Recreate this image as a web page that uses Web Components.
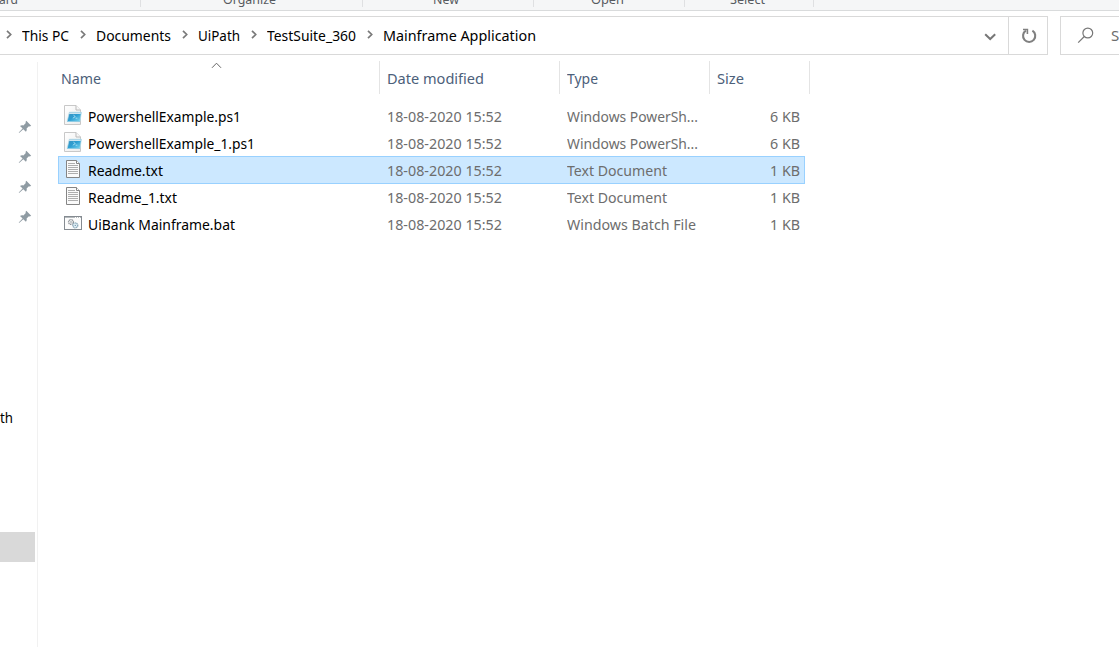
<!DOCTYPE html>
<html lang="en">
<head>
<meta charset="utf-8">
<title>Mainframe Application</title>
<style>
html, body { margin: 0; height: 100%; overflow: hidden; background: #fff; }
body { font: 15px/20px "Noto Sans", "Open Sans", sans-serif; color: #000; }
</style>
</head>
<body>
<file-explorer></file-explorer>
<script>
// Text condensed horizontally to a given width.
class FitText extends HTMLElement {
  connectedCallback() {
    const root = this.attachShadow({ mode: 'open' });
    root.innerHTML = `<style>:host{display:inline-block;white-space:pre;flex:none}span{display:inline-block;transform-origin:0 50%}</style><span><slot></slot></span>`;
    const w = Number(this.getAttribute('w'));
    if (!w) return;
    const span = root.querySelector('span');
    const natural = span.getBoundingClientRect().width;
    span.style.transform = `scaleX(${w / natural})`;
    this.style.width = w + 'px';
  }
}
customElements.define('fit-text', FitText);

const sheet = (id) => `<svg width="18" height="20" viewBox="0 0 18 20">
  <defs><linearGradient id="${id}" x1="0" y1="0" x2="1" y2="1"><stop offset="0" stop-color="#fff"/><stop offset="1" stop-color="#ececec"/></linearGradient>
  <linearGradient id="${id}b" x1="0" y1="0" x2="1" y2="1"><stop offset="0" stop-color="#3d91bd"/><stop offset=".5" stop-color="#2d9ed2"/><stop offset="1" stop-color="#80daf2"/></linearGradient></defs>
  <path d="M.5.5H12L16.5 5V19.5H.5Z" fill="url(#${id})" stroke="#c8c8c8"/>
  <path d="M12 .5V5H16.5" fill="#f7f7f7" stroke="#bbb"/>
  <path d="M5.3 7.2H17.4L16 16.5H3.2Z" fill="url(#${id}b)" stroke="#b8dcea" stroke-width=".7"/>
  <path d="M5.4 7.5H17L16.7 9H5Z" fill="#cfe6f0"/>
  <path d="M9.5 10.2L11.3 11.6L8.8 13.2M11.6 13.2H13.4" fill="none" stroke="#bfeaf8" stroke-width=".8"/>
  <path d="M3.2 16.5H16" stroke="#8ecbe3" stroke-width="1"/></svg>`;
const ICONS = {
  ps: sheet('p'),
  txt: `<svg width="18" height="20" viewBox="0 0 18 20"><path d="M2.5 1.5H12.5L15.5 4.5V18.5H2.5Z" fill="#fafafa" stroke="#858585"/><path d="M12.5 1.5V4.5H15.5" fill="#fff" stroke="#858585"/><path d="M4 4.5H11M4 6.5H14M4 8.5H14M4 10.5H14M4 12.5H14M4 14.5H14" stroke="#aeaeae"/></svg>`,
  bat: `<svg width="18" height="20" viewBox="0 0 18 20"><rect x=".5" y="3.5" width="17" height="13" fill="#fcfcfc" stroke="#858b91"/><path d="M1 4.5H17" stroke="#b5babd"/><path d="M11 4.5H12M13 4.5H14M15 4.5H16" stroke="#fff"/><circle cx="7" cy="9" r="2.4" fill="#f1f1f1" stroke="#8d9297" stroke-width="1.4" stroke-dasharray="1.1 .5"/><circle cx="7" cy="9" r=".7" fill="#81878c"/><circle cx="11.3" cy="12.4" r="2.4" fill="#e4f1f8" stroke="#8caabb" stroke-width="1.4" stroke-dasharray="1.1 .5"/><circle cx="11.3" cy="12.4" r=".7" fill="#769bb0"/></svg>`
};

class RibbonStrip extends HTMLElement {
  connectedCallback() {
    const groups = [['ard', 141, 19, -1], ['Organize', 222, 53, 82], ['New', 171, 26, 70], ['Open', 151, 33, 57], ['Select', 129, 35, 45]];
    this.attachShadow({ mode: 'open' }).innerHTML = `<style>
      :host{display:flex;height:10px;overflow:hidden;background:#f5f6f7;border-bottom:1px solid #d9dbdc;font-size:12.5px;line-height:17px;color:#575a5f}
      div{display:flex;align-items:flex-start;box-sizing:border-box;flex:none;height:7px;border-right:1px solid #dfe0e2}
      fit-text{margin-top:-9px}
    </style>${groups.map(g => `<div style="width:${g[1]}px"><fit-text w="${g[2]}" style="margin-left:${g[3]}px">${g[0]}</fit-text></div>`).join('')}`;
  }
}
customElements.define('ribbon-strip', RibbonStrip);

class AddressBar extends HTMLElement {
  connectedCallback() {
    const parts = [['This PC', 47], ['Documents', 75], ['UiPath', 42], ['TestSuite_360', 89], ['Mainframe Application', 153]];
    const chev = `<svg class="c" width="6" height="9" viewBox="0 0 6 9"><path d="M1 .8L4.7 4.5L1 8.2" fill="none" stroke="#7a7a7a" stroke-width="1.7"/></svg>`;
    this.attachShadow({ mode: 'open' }).innerHTML = `<style>
      :host{display:flex;height:39px;margin-top:5px}
      .path,.refresh,.search{box-sizing:border-box;border:1px solid #d9d9d9;display:flex;align-items:center;flex:none}
      .path{width:1009px;border-left:0;padding-left:6px}
      fit-text{margin-bottom:2px}
      .c{margin:0 10px 2px 0;flex:none}.c+fit-text{margin-right:11px}
      .down{margin:3px 11px 0 auto}
      .refresh{width:39px;border-left:0;justify-content:center;padding-left:2px}
      .search{width:80px;margin-left:12px;padding-left:16px;color:#6d6d6d}
      .search svg{flex:none;margin-bottom:1px}.search fit-text{margin-left:17px}
    </style><div class="path">${parts.map(p => `${chev}<fit-text w="${p[1]}">${p[0]}</fit-text>`).join('')}
      <svg class="down" width="13" height="8" viewBox="0 0 13 8"><path d="M1.2 1.2L6.2 6L11.2 1.2" fill="none" stroke="#777" stroke-width="2"/></svg></div>
    <div class="refresh"><svg width="16" height="16" viewBox="0 0 16 16"><path d="M11.4 2.7A6.1 6.1 0 1 1 4.9 2.7" fill="none" stroke="#808080" stroke-width="2.1"/><path d="M2 1.5H6.4V6" fill="none" stroke="#808080" stroke-width="1.6"/></svg></div>
    <div class="search"><svg width="17" height="17" viewBox="0 0 17 17"><circle cx="10.8" cy="6" r="4.9" fill="none" stroke="#777" stroke-width="1.2"/><path d="M7.3 9.5L1.2 15.6" stroke="#777" stroke-width="1.2"/></svg><fit-text>S</fit-text></div>`;
  }
}
customElements.define('address-bar', AddressBar);

class NavPane extends HTMLElement {
  connectedCallback() {
    const pin = `<svg width="14" height="14" viewBox="0 0 14 14"><path d="M8.3.8L13.2 5.7L11.8 6.5L10.9 6.2L8.6 8.6C9 10 8.7 11 7.9 11.8L5.3 9.2L1.4 12.8L.8 12.9L1 12.2L4.6 8.5L2 5.9C3 5.1 4.2 5 5.4 5.4L7.8 3.1L7.5 2Z" fill="#8f9ba3"/></svg>`;
    this.attachShadow({ mode: 'open' }).innerHTML = `<style>
      :host{display:block;box-sizing:border-box;width:38px;margin-top:7px;border-right:1px solid #f1f1f1;flex:none;overflow:hidden}
      .pins{display:grid;grid-auto-rows:30px;justify-items:end;align-items:center;padding:50px 5px 0 0}
      fit-text{display:block;margin-top:175px}
      .sel{width:35px;height:30px;background:#d9d9d9;margin-top:105px}
    </style><div class="pins">${pin.repeat(4)}</div><fit-text w="13">th</fit-text><div class="sel"></div>`;
  }
}
customElements.define('nav-pane', NavPane);

class ColumnHead extends HTMLElement {
  connectedCallback() {
    this.attachShadow({ mode: 'open' }).innerHTML = `<style>
      :host{display:block;position:relative;box-sizing:border-box;height:33px;padding:7px 0 0 7px;border-right:1px solid #e4e4e4;color:#4c607a;flex:none}
      svg{position:absolute;left:157px;top:1px}
    </style><slot></slot>${this.hasAttribute('sorted') ? '<svg width="11" height="7" viewBox="0 0 11 7"><path d="M1 5.8L5.5 1.2L10 5.8" fill="none" stroke="#666" stroke-width="1"/></svg>' : ''}`;
  }
}
customElements.define('column-head', ColumnHead);

class FileRow extends HTMLElement {
  connectedCallback() {
    const a = (n) => this.getAttribute(n);
    this.attachShadow({ mode: 'open' }).innerHTML = `<style>
      :host{display:grid;box-sizing:border-box;width:747px;height:28px;margin-bottom:-1px;border:1px solid transparent;grid-template-columns:23px 300px 180px 150px 1fr;align-items:center;padding:0 4px 1px 5px;color:#6d6d6d}
      :host([selected]){background:#cce8ff;border-color:#99d1ff}
      .icon{height:20px;margin-top:-2px}.icon svg{display:block}
      .name{color:#000;margin-left:1px}
      .size{justify-self:end}
    </style><span class="icon">${ICONS[a('icon')]}</span><fit-text class="name" w="${a('nw')}">${a('name')}</fit-text>
    <fit-text w="115">18-08-2020 15:52</fit-text><fit-text w="${a('tw')}">${a('type')}</fit-text><fit-text class="size" w="30">${a('size')}</fit-text>`;
  }
}
customElements.define('file-row', FileRow);

class FileList extends HTMLElement {
  connectedCallback() {
    this.attachShadow({ mode: 'open' }).innerHTML = `<style>
      :host{display:block;padding:6px 0 0 16px;flex:1}
      .head{display:flex}.rows{margin:8px 0 0 4px}
    </style><div class="head">
      <column-head sorted style="width:326px"><fit-text w="40">Name</fit-text></column-head>
      <column-head style="width:180px"><fit-text w="97">Date modified</fit-text></column-head>
      <column-head style="width:150px"><fit-text w="31">Type</fit-text></column-head>
      <column-head style="width:100px"><fit-text w="27">Size</fit-text></column-head></div>
    <div class="rows">
      <file-row icon="ps" name="PowershellExample.ps1" nw="153" type="Windows PowerSh..." tw="131" size="6 KB"></file-row>
      <file-row icon="ps" name="PowershellExample_1.ps1" nw="167" type="Windows PowerSh..." tw="131" size="6 KB"></file-row>
      <file-row selected icon="txt" name="Readme.txt" nw="75" type="Text Document" tw="100" size="1 KB"></file-row>
      <file-row icon="txt" name="Readme_1.txt" nw="89" type="Text Document" tw="100" size="1 KB"></file-row>
      <file-row icon="bat" name="UiBank Mainframe.bat" nw="147" type="Windows Batch File" tw="129" size="1 KB"></file-row>
    </div>`;
  }
}
customElements.define('file-list', FileList);

class FileExplorer extends HTMLElement {
  connectedCallback() {
    this.attachShadow({ mode: 'open' }).innerHTML = `<style>
      :host{display:flex;flex-direction:column;height:100vh;overflow:hidden}
      ribbon-strip,address-bar{flex:none}
      main{display:flex;flex:1;min-height:0}
    </style><ribbon-strip></ribbon-strip><address-bar></address-bar><main><nav-pane></nav-pane><file-list></file-list></main>`;
  }
}
customElements.define('file-explorer', FileExplorer);
</script>
</body>
</html>
